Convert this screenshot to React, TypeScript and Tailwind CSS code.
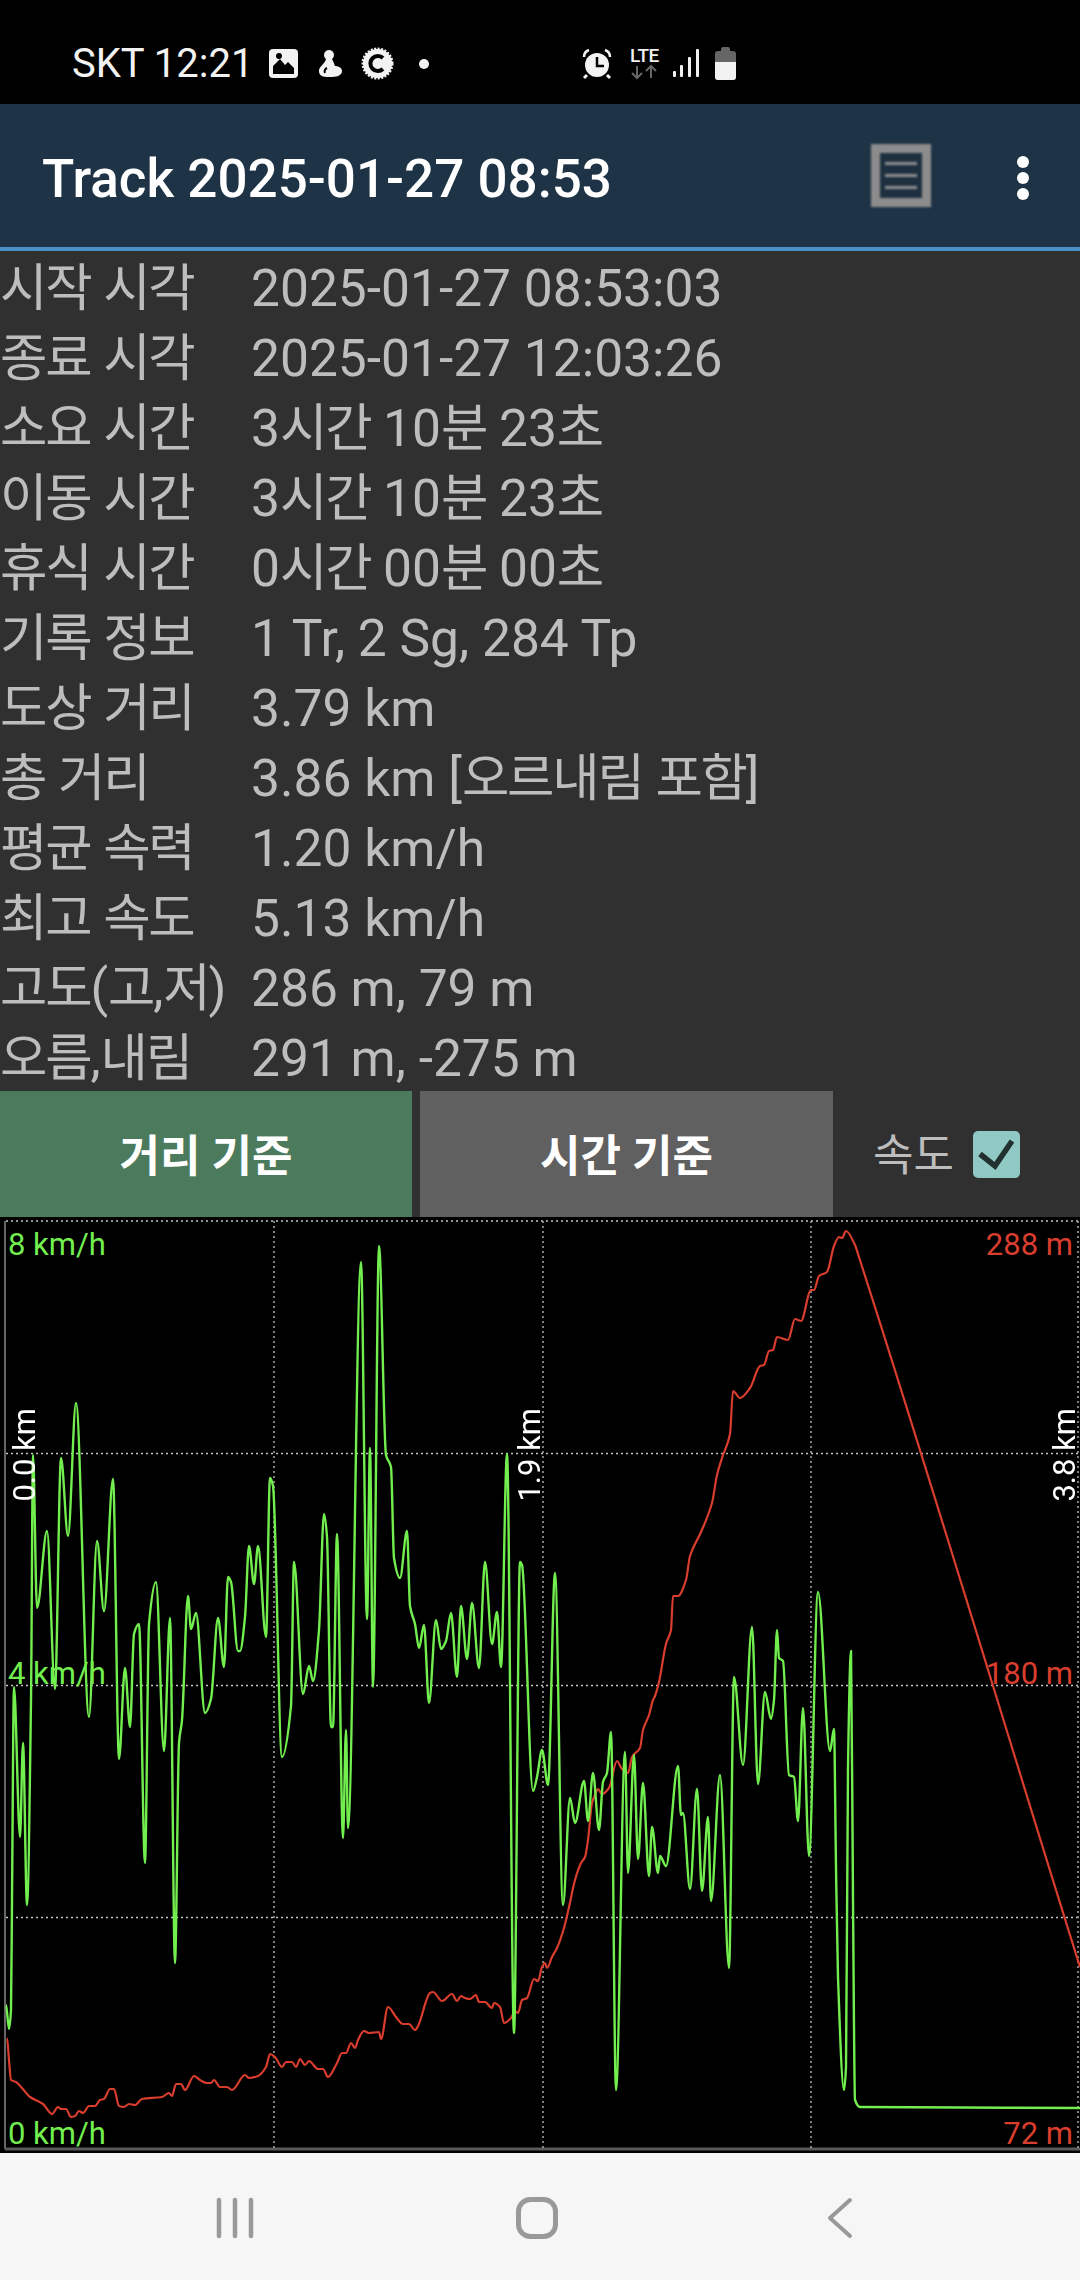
const rows = [
  ["시작 시각", "2025-01-27 08:53:03"],
  ["종료 시각", "2025-01-27 12:03:26"],
  ["소요 시간", "3시간 10분 23초"],
  ["이동 시간", "3시간 10분 23초"],
  ["휴식 시간", "0시간 00분 00초"],
  ["기록 정보", "1 Tr, 2 Sg, 284 Tp"],
  ["도상 거리", "3.79 km"],
  ["총 거리", "3.86 km [오르내림 포함]"],
  ["평균 속력", "1.20 km/h"],
  ["최고 속도", "5.13 km/h"],
  ["고도(고,저)", "286 m, 79 m"],
  ["오름,내림", "291 m, -275 m"],
];

// traced from the chart, in page pixels
const speed: number[][] = [
  [6, 2005], [9, 2029], [11, 2010], [12, 1900], [14, 1687], [20, 1837], [23, 1743], [27, 1905], [31, 1700], [33, 1455], [37, 1608],
  [47, 1531], [55, 1689], [61, 1458], [68, 1536], [76, 1403], [89, 1717], [97, 1541], [104, 1611], [113, 1479], [119, 1759],
  [125, 1668], [130, 1727], [134, 1634], [139, 1624], [145, 1863], [149, 1624], [156, 1582], [164, 1751], [170, 1618], [175, 1963],
  [179, 1743], [182, 1720], [188, 1596], [191, 1629], [196, 1613], [205, 1713], [211, 1699], [218, 1618], [224, 1667], [228, 1577],
  [231, 1582], [238, 1651], [240, 1651], [245, 1617], [249, 1546], [254, 1584], [258, 1546], [266, 1637], [270, 1478], [273, 1486],
  [282, 1757], [291, 1706], [294, 1562], [303, 1694], [309, 1666], [313, 1681], [319, 1630], [324, 1514], [327, 1537], [331, 1727],
  [333, 1727], [337, 1534], [343, 1838], [346, 1730], [348, 1828], [361, 1262], [367, 1619], [370, 1448], [373, 1687], [379, 1246],
  [386, 1455], [391, 1467], [394, 1558], [400, 1578], [407, 1531], [410, 1606], [415, 1624], [419, 1648], [424, 1625], [429, 1703],
  [436, 1620], [441, 1649], [446, 1641], [451, 1613], [457, 1677], [461, 1606], [467, 1659], [472, 1603], [479, 1668], [485, 1562],
  [492, 1644], [497, 1612], [501, 1667], [507, 1454], [514, 2033], [520, 1562], [522, 1565], [533, 1791], [537, 1777], [542, 1750],
  [548, 1785], [555, 1573], [563, 1905], [570, 1798], [575, 1823], [584, 1781], [588, 1821], [593, 1773], [599, 1830], [603, 1782],
  [607, 1773], [611, 1732], [616, 2090], [625, 1752], [628, 1873], [634, 1755], [638, 1859], [643, 1783], [649, 1876], [652, 1827],
  [658, 1873], [660, 1856], [666, 1866], [678, 1766], [681, 1815], [683, 1813], [690, 1889], [697, 1789], [702, 1891], [708, 1817],
  [711, 1901], [720, 1775], [729, 1968], [734, 1677], [743, 1765], [752, 1627], [758, 1784], [765, 1692], [771, 1719], [774, 1700],
  [777, 1630], [779, 1658], [783, 1661], [789, 1775], [794, 1777], [798, 1821], [803, 1708], [809, 1856], [818, 1592], [830, 1751],
  [834, 1729], [836, 1867], [838, 1977], [844, 2090], [846, 2067], [848, 1767], [851, 1651], [853, 1900], [855, 2100], [860, 2107],
  [1080, 2108],
];

const altitude: number[][] = [
  [7, 2038], [9, 2060], [11, 2080], [16, 2082], [22, 2088], [30, 2097], [43, 2104], [52, 2114], [58, 2107], [61, 2109], [66, 2109],
  [71, 2117], [75, 2116], [79, 2111], [83, 2113], [89, 2106], [95, 2106], [100, 2100], [104, 2099], [110, 2089], [114, 2089],
  [119, 2106], [124, 2107], [129, 2104], [135, 2105], [142, 2099], [162, 2097], [169, 2093], [172, 2096], [176, 2084], [181, 2084],
  [185, 2090], [194, 2076], [200, 2080], [207, 2083], [211, 2083], [214, 2080], [220, 2087], [227, 2087], [232, 2090], [245, 2075],
  [249, 2078], [258, 2076], [266, 2067], [270, 2054], [275, 2057], [282, 2067], [286, 2062], [292, 2062], [296, 2067], [300, 2059],
  [305, 2065], [309, 2061], [318, 2069], [323, 2069], [328, 2077], [337, 2063], [342, 2053], [346, 2053], [351, 2043], [355, 2048],
  [358, 2040], [364, 2031], [369, 2033], [379, 2032], [381, 2039], [388, 2007], [396, 2017], [403, 2024], [409, 2024], [415, 2030],
  [418, 2026], [430, 1993], [433, 1992], [442, 2001], [452, 1994], [457, 2001], [461, 1996], [465, 1998], [470, 1999], [476, 1995],
  [479, 2002], [485, 2002], [492, 2008], [494, 2003], [500, 2007], [504, 2023], [511, 2018], [515, 2011], [518, 2013], [522, 2000],
  [527, 1998], [534, 1979], [538, 1981], [542, 1967], [545, 1963], [547, 1968], [552, 1957], [557, 1948], [564, 1928], [569, 1907],
  [575, 1880], [581, 1863], [585, 1857], [588, 1840], [592, 1803], [595, 1795], [598, 1789], [602, 1794], [609, 1788], [617, 1761],
  [622, 1769], [628, 1773], [632, 1757], [640, 1748], [643, 1730], [649, 1715], [653, 1700], [655, 1696], [659, 1682], [666, 1644],
  [671, 1630], [673, 1596], [678, 1596], [686, 1580], [690, 1556], [701, 1532], [712, 1503], [717, 1475], [722, 1458], [730, 1434],
  [733, 1391], [740, 1398], [750, 1388], [760, 1366], [764, 1365], [769, 1351], [773, 1350], [777, 1337], [788, 1340], [795, 1319],
  [801, 1321], [811, 1290], [814, 1290], [819, 1276], [827, 1272], [834, 1246], [839, 1237], [842, 1238], [846, 1231], [855, 1245],
  [858, 1254], [1070, 1935], [1080, 1967],
];

// monotone curve so that the peaks stay rounded without overshooting
function curve(pts: number[][]) {
  const slope = (a: number[], b: number[]) => (b[1] - a[1]) / (b[0] - a[0]);
  const t = pts.map((p, i) => {
    if (i === 0 || i === pts.length - 1) return i === 0 ? 0 : slope(pts[i - 1], p);
    const s0 = slope(pts[i - 1], p);
    const s1 = slope(p, pts[i + 1]);
    if (s0 * s1 <= 0) return 0;
    return (2 * s0 * s1) / (s0 + s1);
  });
  let d = `M${pts[0][0]} ${pts[0][1]}`;
  for (let i = 1; i < pts.length; i++) {
    const [x0, y0] = pts[i - 1];
    const [x1, y1] = pts[i];
    const h = (x1 - x0) / 3;
    d += `C${x0 + h} ${y0 + t[i - 1] * h} ${x1 - h} ${y1 - t[i] * h} ${x1} ${y1}`;
  }
  return d;
}

// the hangul in the reference sits a little tighter than Noto's
function Ko({ text }: { text: string }) {
  return (
    <>
      {text.split(/([가-힣]+)/).map((part, i) =>
        /[가-힣]/.test(part) ? (
          <span key={i} className="tracking-[-2.2px]">{part}</span>
        ) : (
          part
        ),
      )}
    </>
  );
}

function StatusIcons() {
  return (
    <svg width="1080" height="104" className="absolute left-0 top-0">
      {/* picture */}
      <rect x="269" y="49" width="29" height="29" rx="4" fill="#f2f2f2" />
      <path d="M273 74V66l7-7 5 6 3-3 6 6v6z" fill="#000" />
      <circle cx="279" cy="56" r="3" fill="#000" />
      {/* figure */}
      <circle cx="329" cy="55" r="5" fill="#f2f2f2" />
      <path d="M326 59c-1 5-8 8-7 13 1 5 6 5 11 5 6 0 12-1 12-6 0-4-5-5-7-5-1-3-2-5-3-7z" fill="#f2f2f2" />
      <path d="M327 68c-2 1-3 3-2 5" stroke="#000" strokeWidth="2" fill="none" />
      {/* gear C */}
      <circle cx="377.5" cy="63.5" r="14.5" fill="#f2f2f2" stroke="#f2f2f2" strokeWidth="3" strokeDasharray="2 1.4" />
      <circle cx="377.5" cy="63.5" r="14" fill="#f2f2f2" />
      <path d="M383 58a7.5 7.5 0 1 0 0 11" fill="none" stroke="#000" strokeWidth="4" />
      <circle cx="424" cy="64" r="5" fill="#f2f2f2" />
      {/* alarm */}
      <circle cx="597" cy="65" r="12" fill="#f2f2f2" />
      <path d="M597 57v9h7" fill="none" stroke="#000" strokeWidth="2.5" />
      <path d="M584 57c0-3 2-6 5-7M610 57c0-3-2-6-5-7" fill="none" stroke="#f2f2f2" strokeWidth="2.5" />
      <path d="M587 75l-3 3M607 75l3 3" stroke="#f2f2f2" strokeWidth="3" />
      {/* lte arrows */}
      <path d="M637 66v12M632 73l5 5 5-5" fill="none" stroke="#666" strokeWidth="2" />
      <path d="M651 78V66M646 71l5-5 5 5" fill="none" stroke="#666" strokeWidth="2" />
      {/* signal */}
      <rect x="673" y="71" width="3" height="6" rx="1" fill="#f2f2f2" />
      <rect x="680" y="65" width="3" height="12" rx="1" fill="#f2f2f2" />
      <rect x="688" y="57" width="3" height="20" rx="1" fill="#f2f2f2" />
      <rect x="696" y="49" width="3" height="28" rx="1" fill="#f2f2f2" />
      {/* battery */}
      <rect x="721" y="47" width="9" height="6" rx="2" fill="#666" />
      <rect x="715" y="51" width="21" height="29" rx="3" fill="#666" />
      <path d="M715 62h21v15a3 3 0 0 1-3 3h-15a3 3 0 0 1-3-3z" fill="#f2f2f2" />
    </svg>
  );
}

function Chart() {
  const dotted = { strokeWidth: 1.5, strokeDasharray: "2 3" };
  return (
    <div className="relative flex-1 overflow-hidden bg-black text-[31px] leading-[36px]">
      <svg width="1080" height="936" viewBox="0 1217 1080 936" className="absolute left-0 top-0">
        <path d="M5 1221V2149" stroke="#666" strokeWidth="2" />
        <path d="M5 2149H1080" stroke="#5a5a5a" strokeWidth="3" />
        {[1221, 1453.5, 1685.5, 1917.5].map((y) => (
          <path key={y} d={`M6 ${y}H1080`} stroke="#c4c4c4" {...dotted} />
        ))}
        {[274, 543, 811, 1078].map((x) => (
          <path key={x} d={`M${x} 1221V2148`} stroke="#a8a8a8" {...dotted} />
        ))}
        <path d={curve(altitude)} fill="none" stroke="#d93d2e" strokeWidth="2.2" strokeLinejoin="round" />
        <path d={curve(speed)} fill="none" stroke="#72ef4f" strokeWidth="2.4" strokeLinejoin="round" />
      </svg>
      <span className="absolute left-[8px] top-[10px] text-[#72ef4f]">8 km/h</span>
      <span className="absolute left-[8px] top-[439px] text-[#72ef4f]">4 km/h</span>
      <span className="absolute left-[8px] top-[899px] text-[#72ef4f]">0 km/h</span>
      <span className="absolute right-[7px] top-[10px] text-[#d93d2e]">288 m</span>
      <span className="absolute right-[7px] top-[439px] text-[#d93d2e]">180 m</span>
      <span className="absolute right-[7px] top-[899px] text-[#d93d2e]">72 m</span>
      <span className="absolute left-[10px] top-[191px] rotate-180 leading-[30px] text-white [writing-mode:vertical-rl]">0.0 km</span>
      <span className="absolute left-[515px] top-[191px] rotate-180 leading-[30px] text-white [writing-mode:vertical-rl]">1.9 km</span>
      <span className="absolute left-[1052px] top-[191px] rotate-180 leading-[26px] text-white [writing-mode:vertical-rl]">3.8 km</span>
    </div>
  );
}

export default function App() {
  return (
    <div className="flex h-[2280px] w-[1080px] flex-col overflow-hidden bg-[#303030] font-['Roboto','Noto_Sans_CJK_KR',sans-serif]">
      <div className="relative flex h-[104px] items-center bg-black pl-[72px] pt-[24px] text-[40px] text-[#f2f2f2]">
        <span className="leading-none">SKT 12:21</span>
        <StatusIcons />
        <span className="absolute left-[630px] top-[46px] text-[19px] font-medium leading-[19px] tracking-[-0.5px]">LTE</span>
      </div>

      <div className="flex h-[147px] items-center border-b-4 border-[#4a90c2] bg-[#1e3446] pl-[42px] pr-[51px]">
        <h1 className="mt-[8px] text-[53px] font-medium leading-none text-white">Track 2025-01-27 08:53</h1>
        <div className="ml-auto flex h-[63px] w-[60px] flex-col items-center justify-center gap-[9px] border-[9px] border-[#8c8c8c] bg-[#1e3040] blur-[1px]">
          <span className="h-[3px] w-[32px] shrink-0 bg-[#8f8f8f]" />
          <span className="h-[3px] w-[32px] shrink-0 bg-[#8f8f8f]" />
          <span className="h-[3px] w-[32px] shrink-0 bg-[#8f8f8f]" />
        </div>
        <div className="ml-[86px] mt-[4px] flex flex-col gap-[4px]">
          <span className="size-[12px] rounded-full bg-white" />
          <span className="size-[12px] rounded-full bg-white" />
          <span className="size-[12px] rounded-full bg-white" />
        </div>
      </div>

      <div className="h-[840px] pt-[3px] text-[51.5px] text-[#bdbdbd]">
        {rows.map(([label, value]) => (
          <div key={label} className="flex h-[70px] items-center whitespace-nowrap leading-none">
            <span className="w-[251px]"><Ko text={label} /></span>
            <span><Ko text={value} /></span>
          </div>
        ))}
      </div>

      <div className="flex h-[126px] items-stretch">
        <button className="w-[412px] bg-[#4c7a5c] pt-[5px] text-[44px] font-bold text-white">거리 기준</button>
        <button className="ml-[8px] w-[413px] bg-[#606060] pt-[5px] text-[44px] font-bold text-white">시간 기준</button>
        <div className="ml-[40px] flex items-center gap-[19px]">
          <span className="pt-[4px] text-[44px] text-[#bdbdbd]">속도</span>
          <span className="h-[47px] w-[47px] rounded-[5px] bg-[#90c8c4]">
            <svg width="47" height="47" viewBox="0 0 47 47">
              <path d="M7 23l15 12 17-25" fill="none" stroke="#22302f" strokeWidth="5.5" />
            </svg>
          </span>
        </div>
      </div>

      <Chart />

      <div className="relative flex h-[127px] bg-[#f6f6f6]">
        <svg width="1080" height="127" viewBox="0 2153 1080 127" className="absolute left-0 top-0">
          <path d="M219 2200v36M235 2200v36M251 2200v36" stroke="#999" strokeWidth="4.5" strokeLinecap="round" />
          <rect x="518.5" y="2199.5" width="37" height="37" rx="12" fill="none" stroke="#999" strokeWidth="5" />
          <path d="M850 2200l-20 18 20 18" fill="none" stroke="#999" strokeWidth="4" strokeLinecap="round" strokeLinejoin="round" />
        </svg>
      </div>
    </div>
  );
}
